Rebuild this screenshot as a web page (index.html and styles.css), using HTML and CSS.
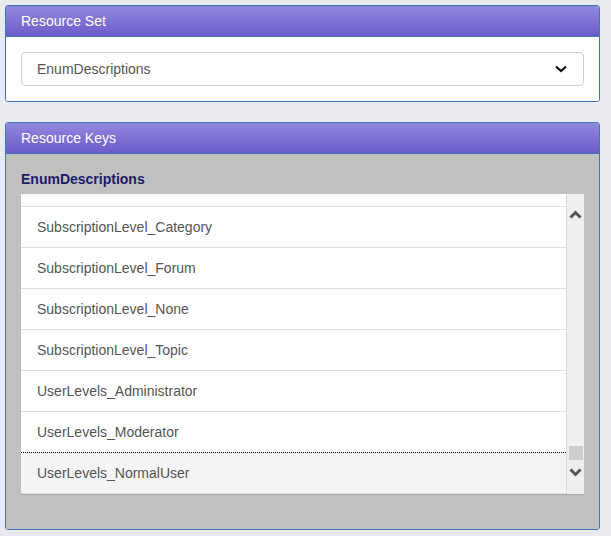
FILE: index.html
```html
<!DOCTYPE html>
<html>
<head>
<meta charset="utf-8">
<link rel="stylesheet" href="styles.css">
</head>
<body>
<div class="page">
  <div class="panel">
    <div class="panel-head">Resource Set</div>
    <div class="panel-body white">
      <div class="select">
        <span>EnumDescriptions</span>
        <svg class="chev" width="12" height="8" viewBox="0 0 12 8"><path d="M1 1.5 L6 6 L11 1.5" fill="none" stroke="#111" stroke-width="2.2"/></svg>
      </div>
    </div>
  </div>
  <div class="panel second">
    <div class="panel-head">Resource Keys</div>
    <div class="panel-body gray">
      <div class="set-title">EnumDescriptions</div>
      <div class="list">
        <div class="rows">
          <div class="row partial"></div>
          <div class="row">SubscriptionLevel_Category</div>
          <div class="row">SubscriptionLevel_Forum</div>
          <div class="row">SubscriptionLevel_None</div>
          <div class="row">SubscriptionLevel_Topic</div>
          <div class="row">UserLevels_Administrator</div>
          <div class="row focus">UserLevels_Moderator</div>
          <div class="row active">UserLevels_NormalUser</div>
        </div>
        <div class="scrollbar">
          <svg class="arrow up" width="13" height="9" viewBox="0 0 13 9"><path d="M1.5 7.5 L6.5 2.5 L11.5 7.5" fill="none" stroke="#555" stroke-width="3"/></svg>
          <div class="track"><div class="thumb"></div></div>
          <svg class="arrow down" width="13" height="9" viewBox="0 0 13 9"><path d="M1.5 1.5 L6.5 6.5 L11.5 1.5" fill="none" stroke="#555" stroke-width="3"/></svg>
        </div>
      </div>
    </div>
  </div>
</div>
</body>
</html>
```

FILE: styles.css
```css
html, body {
  margin: 0;
  padding: 0;
  background: #e9eaed;
  font-family: "Liberation Sans", Arial, sans-serif;
  font-size: 14px;
}
.page {
  padding: 5px;
  width: 595px;
}
.panel {
  border: 1px solid #3c78b5;
  border-radius: 3px;
  overflow: hidden;
}
.panel.second {
  margin-top: 20px;
}
.panel-head {
  height: 30px;
  line-height: 30px;
  padding: 0 15px;
  color: #fff;
  background: linear-gradient(to bottom, #9189dd, #6b5cc9);
  border-bottom: 1px solid #3c78b5;
}
.panel-body {
  padding: 15px;
}
.panel-body.white {
  background: #fff;
}
.panel-body.gray {
  background: #c0c0c0;
  padding-bottom: 35px;
}
.select {
  height: 32px;
  border: 1px solid #cfcfcf;
  border-radius: 4px;
  background: #fff;
  display: flex;
  align-items: center;
  justify-content: space-between;
  padding: 0 16px 0 15px;
  color: #555;
}
.chev {
  display: block;
}
.set-title {
  font-weight: bold;
  color: #1c1c6b;
  line-height: 20px;
  margin-bottom: 5px;
}
.list {
  display: flex;
  height: 300px;
  box-shadow: 0 1px 1px rgba(0,0,0,0.12);
  border-radius: 0 0 0 3px;
}
.rows {
  flex: 1;
  background: #fff;
  display: flex;
  flex-direction: column;
  border-radius: 0 0 0 3px;
  overflow: hidden;
}
.row {
  height: 40px;
  line-height: 40px;
  padding-left: 16px;
  color: #555;
  border-bottom: 1px solid #dedede;
}
.row.partial {
  height: 12px;
}
.row.focus {
  border-bottom: 1px dotted #000;
}
.row.active {
  background: #f4f4f4;
}
.scrollbar {
  width: 17px;
  background: #efefef;
  border-left: 1px solid #dcdcdc;
  display: flex;
  flex-direction: column;
  align-items: center;
}
.arrow {
  display: block;
  flex: none;
}
.arrow.up {
  margin-top: 16px;
}
.track {
  flex: 1;
  width: 100%;
  display: flex;
  flex-direction: column;
  justify-content: flex-end;
  align-items: center;
}
.thumb {
  width: 14px;
  height: 14px;
  background: #cdcdcd;
  margin-bottom: 8px;
}
.arrow.down {
  margin-bottom: 17px;
}
```
